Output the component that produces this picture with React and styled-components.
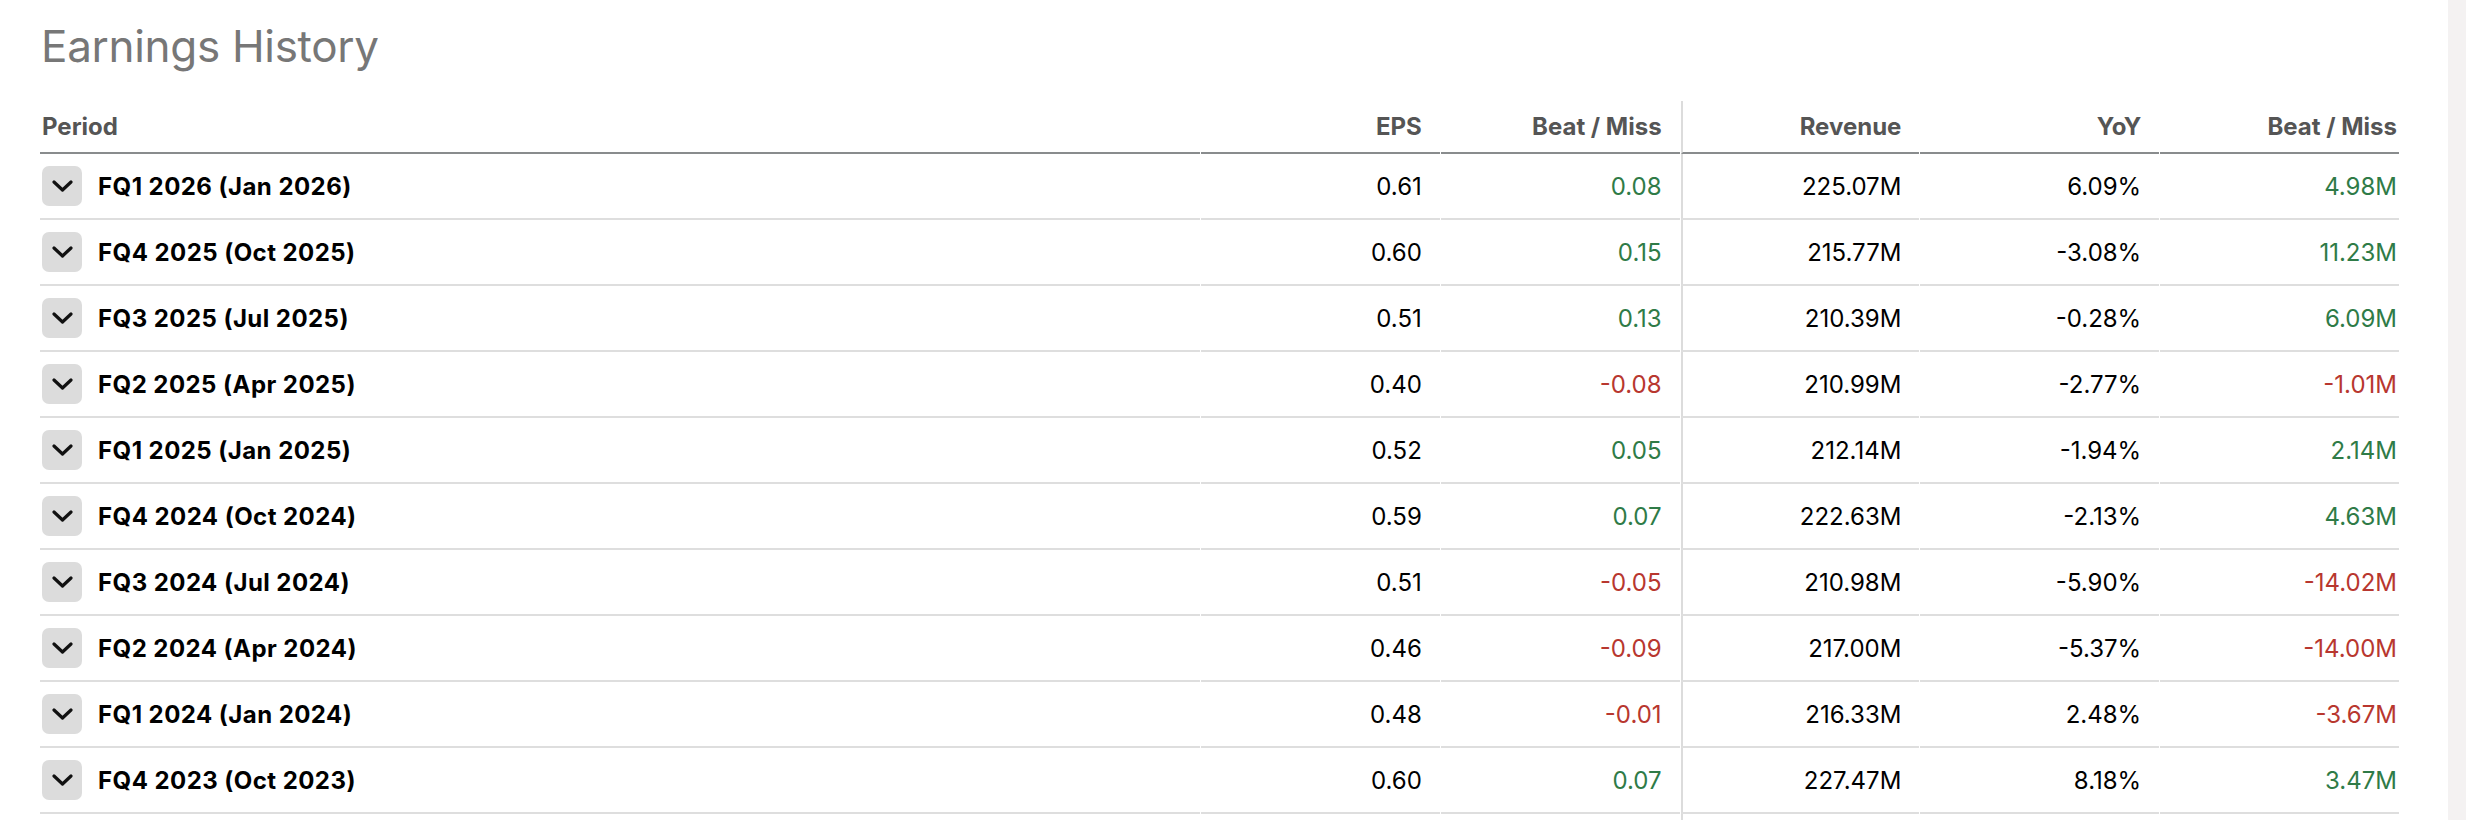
import React from "react";
import styled, { createGlobalStyle } from "styled-components";

const Global = createGlobalStyle`
  html, body { margin: 0; padding: 0; background: #fff; overflow: hidden; }
  body { font-family: Inter, "Noto Sans", "Liberation Sans", sans-serif; }
`;

const Page = styled.div`
  display: flex;
  width: 2466px;
  height: 820px;
`;

const Main = styled.main`
  flex: 1;
  min-width: 0;
  padding: 0 49px 0 40px;
`;

const ScrollTrack = styled.div`
  width: 18px;
  flex: none;
  background: #f4f2f2;
`;

const Title = styled.h2`
  margin: 20px 0 28px 1px;
  font-size: 44px;
  line-height: 53px;
  font-weight: 400;
  color: #777;
  letter-spacing: -0.3px;
`;

const Table = styled.table`
  width: calc(100% + 2px);
  table-layout: fixed;
  border-collapse: separate;
  border-spacing: 1px 0;
  margin: 0 -1px;
  font-size: 24px;
`;

const HeadCell = styled.th`
  height: 51px;
  padding: 0 ${(p) => (p.$last ? "2px" : "18px")} 0 2px;
  border-bottom: 2px solid #898c8d;
  ${(p) => p.$divider && "border-left: 2px solid #dcdcdc;"}
  text-align: ${(p) => (p.$left ? "left" : "right")};
  font-weight: 700;
  color: #555;
  vertical-align: middle;
  white-space: nowrap;
`;

const Cell = styled.td`
  height: 64px;
  padding: 0 ${(p) => (p.$last ? "2px" : "18px")} 0 2px;
  border-bottom: 2px solid #dedede;
  ${(p) => p.$divider && "border-left: 2px solid #dcdcdc;"}
  text-align: right;
  vertical-align: middle;
  white-space: nowrap;
  color: ${(p) => (p.$tone === "pos" ? "#2f7b47" : p.$tone === "neg" ? "#b8372f" : "#000")};
`;

const PeriodCell = styled(Cell)`
  text-align: left;
`;

const PeriodInner = styled.div`
  display: flex;
  align-items: center;
  gap: 16px;
  font-weight: 700;
  color: #000;
  letter-spacing: 0.45px;
`;

const ToggleButton = styled.button`
  width: 40px;
  height: 40px;
  flex: none;
  border: none;
  border-radius: 7px;
  background: #dcdcdc;
  display: flex;
  align-items: center;
  justify-content: center;
  padding: 0;
  cursor: pointer;
`;

const Chevron = () => (
  <svg width="21" height="12" viewBox="0 0 21 12" fill="none">
    <polyline
      points="2,2 10.5,10 19,2"
      stroke="#111"
      strokeWidth="3.2"
      strokeLinecap="round"
      strokeLinejoin="round"
    />
  </svg>
);

const rows = [
  ["FQ1 2026 (Jan 2026)", "0.61", "0.08", "225.07M", "6.09%", "4.98M"],
  ["FQ4 2025 (Oct 2025)", "0.60", "0.15", "215.77M", "-3.08%", "11.23M"],
  ["FQ3 2025 (Jul 2025)", "0.51", "0.13", "210.39M", "-0.28%", "6.09M"],
  ["FQ2 2025 (Apr 2025)", "0.40", "-0.08", "210.99M", "-2.77%", "-1.01M"],
  ["FQ1 2025 (Jan 2025)", "0.52", "0.05", "212.14M", "-1.94%", "2.14M"],
  ["FQ4 2024 (Oct 2024)", "0.59", "0.07", "222.63M", "-2.13%", "4.63M"],
  ["FQ3 2024 (Jul 2024)", "0.51", "-0.05", "210.98M", "-5.90%", "-14.02M"],
  ["FQ2 2024 (Apr 2024)", "0.46", "-0.09", "217.00M", "-5.37%", "-14.00M"],
  ["FQ1 2024 (Jan 2024)", "0.48", "-0.01", "216.33M", "2.48%", "-3.67M"],
  ["FQ4 2023 (Oct 2023)", "0.60", "0.07", "227.47M", "8.18%", "3.47M"],
];

const tone = (v) => (v.startsWith("-") ? "neg" : "pos");

export default function App() {
  return (
    <Page>
      <Global />
      <Main>
        <Title>Earnings History</Title>
        <Table>
          <colgroup>
            <col style={{ width: "1160px" }} />
            <col />
            <col />
            <col />
            <col />
            <col />
          </colgroup>
          <thead>
            <tr>
              <HeadCell $left>Period</HeadCell>
              <HeadCell>EPS</HeadCell>
              <HeadCell>Beat / Miss</HeadCell>
              <HeadCell $divider>Revenue</HeadCell>
              <HeadCell>YoY</HeadCell>
              <HeadCell $last>Beat / Miss</HeadCell>
            </tr>
          </thead>
          <tbody>
            {rows.map((r) => (
              <tr key={r[0]}>
                <PeriodCell>
                  <PeriodInner>
                    <ToggleButton aria-label="Expand">
                      <Chevron />
                    </ToggleButton>
                    {r[0]}
                  </PeriodInner>
                </PeriodCell>
                <Cell>{r[1]}</Cell>
                <Cell $tone={tone(r[2])}>{r[2]}</Cell>
                <Cell $divider>{r[3]}</Cell>
                <Cell>{r[4]}</Cell>
                <Cell $last $tone={tone(r[5])}>{r[5]}</Cell>
              </tr>
            ))}
            <tr>
              <Cell />
              <Cell />
              <Cell />
              <Cell $divider />
              <Cell />
              <Cell $last />
            </tr>
          </tbody>
        </Table>
      </Main>
      <ScrollTrack />
    </Page>
  );
}
